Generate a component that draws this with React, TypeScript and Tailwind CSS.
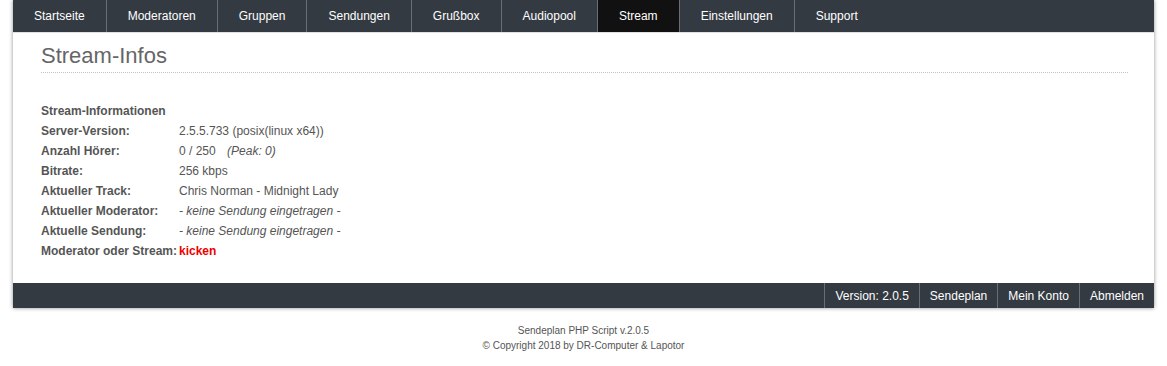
import React from "react";

const navItems = [
  "Startseite",
  "Moderatoren",
  "Gruppen",
  "Sendungen",
  "Grußbox",
  "Audiopool",
  "Stream",
  "Einstellungen",
  "Support",
];

const footerLinks = ["Version: 2.0.5", "Sendeplan", "Mein Konto", "Abmelden"];

// stream info page
function App() {
  return (
    <div className="min-h-screen bg-white font-['Liberation_Sans',Arial,sans-serif] text-[12px] text-[#555]">
      <div className="w-[1141px] mx-auto shadow-[0_0_4px_rgba(0,0,0,0.45)]">
        <nav className="flex h-[33px] bg-[#343a42] border-b border-[#dde1e6]">
          {navItems.map((item, i) => (
            <div
              key={item}
              className={
                "flex items-center px-[21px] text-white " +
                (i > 0 ? "border-l border-[#6a6e73] " : "") +
                (item === "Stream" ? "bg-[#111111]" : "")
              }
            >
              {item}
            </div>
          ))}
        </nav>

        <div className="bg-white pl-[28px] pr-[26px] pt-[10px] pb-[22px]">
          <h1 className="text-[22px] leading-[26px] text-[#666] pb-[3px] border-b border-dotted border-[#c4c4c4]">
            Stream-Infos
          </h1>

          <div className="mt-[28px] leading-[20px]">
            <div className="font-bold">Stream-Informationen</div>
            <Row label="Server-Version:">2.5.5.733 (posix(linux x64))</Row>
            <Row label="Anzahl Hörer:">
              0 / 250 <span className="italic ml-[8px]">(Peak: 0)</span>
            </Row>
            <Row label="Bitrate:">256 kbps</Row>
            <Row label="Aktueller Track:">Chris Norman - Midnight Lady</Row>
            <Row label="Aktueller Moderator:">
              <span className="italic">- keine Sendung eingetragen -</span>
            </Row>
            <Row label="Aktuelle Sendung:">
              <span className="italic">- keine Sendung eingetragen -</span>
            </Row>
            <Row label="Moderator oder Stream:">
              <span className="font-bold text-[#ee0000]">kicken</span>
            </Row>
          </div>
        </div>

        <div className="flex justify-end h-[25px] bg-[#343a42]">
          {footerLinks.map((link) => (
            <div
              key={link}
              className="flex items-center px-[10px] text-white border-l border-[#6a6e73]"
            >
              {link}
            </div>
          ))}
        </div>
      </div>

      <div className="mt-[15px] text-center text-[10px] leading-[15px] text-[#555]">
        <p>Sendeplan PHP Script v.2.0.5</p>
        <p>© Copyright 2018 by DR-Computer &amp; Lapotor</p>
      </div>
    </div>
  );
}

function Row({ label, children }: { label: string; children: React.ReactNode }) {
  return (
    <div className="flex">
      <div className="w-[138px] shrink-0 font-bold">{label}</div>
      <div>{children}</div>
    </div>
  );
}

export default App;
